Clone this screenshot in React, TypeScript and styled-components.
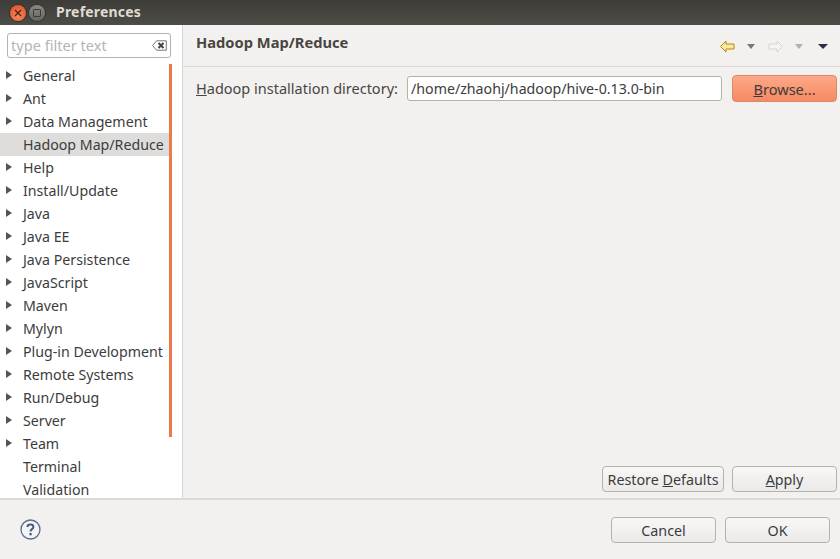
import React from "react";
import styled, { createGlobalStyle } from "styled-components";

const GlobalStyle = createGlobalStyle`
    html, body {
        margin: 0;
        padding: 0;
        background: #f2f1f0;
    }
`;

const treeItems = [
    { label: "General", arrow: true },
    { label: "Ant", arrow: true },
    { label: "Data Management", arrow: true },
    { label: "Hadoop Map/Reduce", arrow: false, selected: true },
    { label: "Help", arrow: true },
    { label: "Install/Update", arrow: true },
    { label: "Java", arrow: true },
    { label: "Java EE", arrow: true },
    { label: "Java Persistence", arrow: true },
    { label: "JavaScript", arrow: true },
    { label: "Maven", arrow: true },
    { label: "Mylyn", arrow: true },
    { label: "Plug-in Development", arrow: true },
    { label: "Remote Systems", arrow: true },
    { label: "Run/Debug", arrow: true },
    { label: "Server", arrow: true },
    { label: "Team", arrow: true },
    { label: "Terminal", arrow: false },
    { label: "Validation", arrow: false },
];

const NavArrow = ({ dir, active }: { dir: "left" | "right"; active: boolean }) => (
    <svg width="15" height="13" viewBox="0 0 15 13">
        <path
            d={dir === "left" ? "M0.5 6.5 L6 1 V4 H14 V9 H6 V12 Z" : "M14.5 6.5 L9 1 V4 H1 V9 H9 V12 Z"}
            fill={active ? "#fbe9a0" : "#f4f4f2"}
            stroke={active ? "#b8860f" : "#d4d4d2"}
            strokeWidth="1"
        />
    </svg>
);

const App = () => {
    return (
        <Window>
            <GlobalStyle />
            <TitleBar>
                <CloseBtn>
                    <svg width="8" height="8" viewBox="0 0 8 8">
                        <path d="M1 1 L7 7 M7 1 L1 7" stroke="#4a2010" strokeWidth="1.3" />
                    </svg>
                </CloseBtn>
                <MaxBtn>
                    <MaxGlyph />
                </MaxBtn>
                <Title>Preferences</Title>
            </TitleBar>
            <Main>
                <Sidebar>
                    <FilterBox>
                        <FilterText>type filter text</FilterText>
                        <svg width="15" height="11" viewBox="0 0 15 11">
                            <path d="M0.7 5.5 L4.5 0.8 H14.3 V10.2 H4.5 Z" fill="#fff" stroke="#777" strokeWidth="1" />
                            <path d="M6.5 3 L11.5 8 M11.5 3 L6.5 8" stroke="#444" strokeWidth="2" />
                        </svg>
                    </FilterBox>
                    <TreeWrap>
                        <Tree>
                            {treeItems.map((item) => (
                                <Row key={item.label} $selected={item.selected}>
                                    <Arrow $visible={item.arrow} />
                                    {item.label}
                                </Row>
                            ))}
                        </Tree>
                        <Scrollbar />
                    </TreeWrap>
                </Sidebar>
                <Content>
                    <Header>
                        <Heading>Hadoop Map/Reduce</Heading>
                        <Toolbar>
                            <NavArrow dir="left" active />
                            <DropMark $color="#777" />
                            <NavArrow dir="right" active={false} />
                            <DropMark $color="#b0b0b0" />
                            <DropMark $color="#2f2a4a" $wide />
                        </Toolbar>
                    </Header>
                    <FieldRow>
                        <FieldLabel>
                            <u>H</u>adoop installation directory:
                        </FieldLabel>
                        <PathInput>/home/zhaohj/hadoop/hive-0.13.0-bin</PathInput>
                        <BrowseButton>
                            <u>B</u>rowse...
                        </BrowseButton>
                    </FieldRow>
                    <PageActions>
                        <Button $width={122}>
                            Restore <u>D</u>efaults
                        </Button>
                        <Button $width={105}>
                            <u>A</u>pply
                        </Button>
                    </PageActions>
                </Content>
            </Main>
            <Footer>
                <HelpIcon>
                    <svg width="21" height="21" viewBox="0 0 21 21">
                        <circle cx="10.5" cy="10.5" r="9.5" fill="#f4f4f6" stroke="#5a6b8c" strokeWidth="1.3" />
                        <path
                            d="M7.4 8 C7.6 4.8 13.4 4.8 13.4 8 C13.4 10.2 10.5 10 10.5 12.4"
                            fill="none"
                            stroke="#4a5a7a"
                            strokeWidth="2"
                        />
                        <rect x="9.4" y="14" width="2.3" height="2.3" fill="#4a5a7a" />
                    </svg>
                </HelpIcon>
                <DialogActions>
                    <Button $width={105}>Cancel</Button>
                    <Button $width={105}>OK</Button>
                </DialogActions>
            </Footer>
        </Window>
    );
};

export default App;

const uiFont = `"Noto Sans", "Open Sans", sans-serif`;

const Window = styled.div`
    width: 840px;
    height: 559px;
    display: flex;
    flex-direction: column;
    overflow: hidden;
    background: #f2f1f0;
    color: #3c3c3c;
    font-family: ${uiFont};
    font-size: 14px;
`;

const TitleBar = styled.div`
    height: 25px;
    display: flex;
    align-items: center;
    padding-left: 10px;
    background: linear-gradient(#3d3c38, #4d4c47);
    flex-shrink: 0;
`;

const CloseBtn = styled.div`
    width: 16px;
    height: 16px;
    border-radius: 50%;
    display: flex;
    align-items: center;
    justify-content: center;
    background: radial-gradient(circle at 50% 70%, #f58a5a, #dd4a22);
    box-shadow: 0 0 0 1px #33322e;
`;

const MaxBtn = styled.div`
    width: 16px;
    height: 16px;
    margin-left: 3px;
    border-radius: 50%;
    display: flex;
    align-items: center;
    justify-content: center;
    background: linear-gradient(#8a8983, #66655f);
    box-shadow: 0 0 0 1px #33322e;
`;

const MaxGlyph = styled.div`
    width: 6px;
    height: 6px;
    border: 1px solid #3d3c38;
    border-radius: 1px;
`;

const Title = styled.div`
    margin: -2px 0 0 11px;
    color: #dfdbd2;
    font-size: 14px;
    font-weight: 700;
    letter-spacing: 0.2px;
`;

const Main = styled.div`
    flex: 1;
    display: flex;
    min-height: 0;
    border-bottom: 2px solid #dcdad5;
`;

const Sidebar = styled.div`
    width: 182px;
    flex-shrink: 0;
    display: flex;
    flex-direction: column;
    background: #fff;
    border-right: 1px solid #d8d6d2;
`;

const FilterBox = styled.div`
    height: 23px;
    margin: 8px 11px 0 7px;
    padding: 0 3px 0 3px;
    display: flex;
    align-items: center;
    justify-content: space-between;
    background: #fff;
    border: 1px solid #b5b2ac;
    border-radius: 3px;
`;

const FilterText = styled.span`
    margin-top: -2px;
    color: #b4b4b4;
    font-size: 14.6px;
`;

const TreeWrap = styled.div`
    flex: 1;
    display: flex;
    margin-top: 6px;
    min-height: 0;
    overflow: hidden;
`;

const Tree = styled.div`
    flex: 1;
    min-width: 0;
`;

const Row = styled.div<{ $selected?: boolean }>`
    height: 23px;
    display: flex;
    align-items: center;
    padding-left: 6px;
    white-space: nowrap;
    color: #3c3c3c;
    font-size: 14.2px;
    background: ${(p) => (p.$selected ? "#dedddb" : "transparent")};
`;

const Arrow = styled.span<{ $visible: boolean }>`
    width: 0;
    height: 0;
    margin-right: 11px;
    margin-top: -2px;
    border-left: 6px solid ${(p) => (p.$visible ? "#555" : "transparent")};
    border-top: 4px solid transparent;
    border-bottom: 4px solid transparent;
`;

const Scrollbar = styled.div`
    width: 3px;
    height: 373px;
    margin: 0 10px 0 0;
    background: #ed7a4b;
    flex-shrink: 0;
`;

const Content = styled.div`
    flex: 1;
    display: flex;
    flex-direction: column;
    min-width: 0;
`;

const Header = styled.div`
    height: 42px;
    display: flex;
    align-items: flex-start;
    justify-content: space-between;
    padding: 7px 12px 0 13px;
    box-sizing: border-box;
    border-bottom: 1px solid #dcdad5;
    flex-shrink: 0;
`;

const Heading = styled.div`
    font-size: 14.7px;
    font-weight: 700;
    color: #4a4540;
`;

const Toolbar = styled.div`
    display: flex;
    align-items: center;
    gap: 13px;
    padding-top: 8px;
`;

const DropMark = styled.span<{ $color: string; $wide?: boolean }>`
    width: 0;
    height: 0;
    margin-left: ${(p) => (p.$wide ? "2px" : "-1px")};
    border-top: 5px solid ${(p) => p.$color};
    border-left: ${(p) => (p.$wide ? 5 : 4)}px solid transparent;
    border-right: ${(p) => (p.$wide ? 5 : 4)}px solid transparent;
`;

const FieldRow = styled.div`
    display: flex;
    align-items: center;
    padding: 8px 3px 0 13px;
`;

const FieldLabel = styled.label`
    width: 211px;
    flex-shrink: 0;
    margin-top: -2px;
    color: #4a4540;
    font-size: 14.5px;
    white-space: nowrap;
`;

const PathInput = styled.div`
    width: 315px;
    height: 25px;
    box-sizing: border-box;
    padding: 0 3px;
    display: flex;
    align-items: center;
    background: #fff;
    border: 1px solid #b5b2ac;
    border-radius: 3px;
    color: #3c3c3c;
    font-size: 14.2px;
    white-space: nowrap;
`;

const Button = styled.button<{ $width: number }>`
    width: ${(p) => p.$width}px;
    height: 26px;
    padding: 0;
    font-family: inherit;
    font-size: 14.3px;
    color: #3c3c3c;
    background: linear-gradient(#f8f7f6, #eceae8);
    border: 1px solid #b5b2ac;
    border-radius: 4px;
    white-space: nowrap;
`;

const BrowseButton = styled(Button).attrs({ $width: 105 })`
    height: 27px;
    margin-left: 10px;
    font-size: 14.6px;
    background: linear-gradient(#fda888, #f58a62);
    border-color: #d98a6c;
`;

const PageActions = styled.div`
    margin-top: auto;
    display: flex;
    justify-content: flex-end;
    gap: 8px;
    padding: 0 3px 6px 0;
`;

const Footer = styled.div`
    height: 59px;
    flex-shrink: 0;
    display: flex;
    align-items: center;
    justify-content: space-between;
    padding: 1px 10px 0 20px;
    box-sizing: border-box;
`;

const HelpIcon = styled.div`
    display: flex;
    margin-top: -1px;
`;

const DialogActions = styled.div`
    display: flex;
    gap: 9px;
`;
